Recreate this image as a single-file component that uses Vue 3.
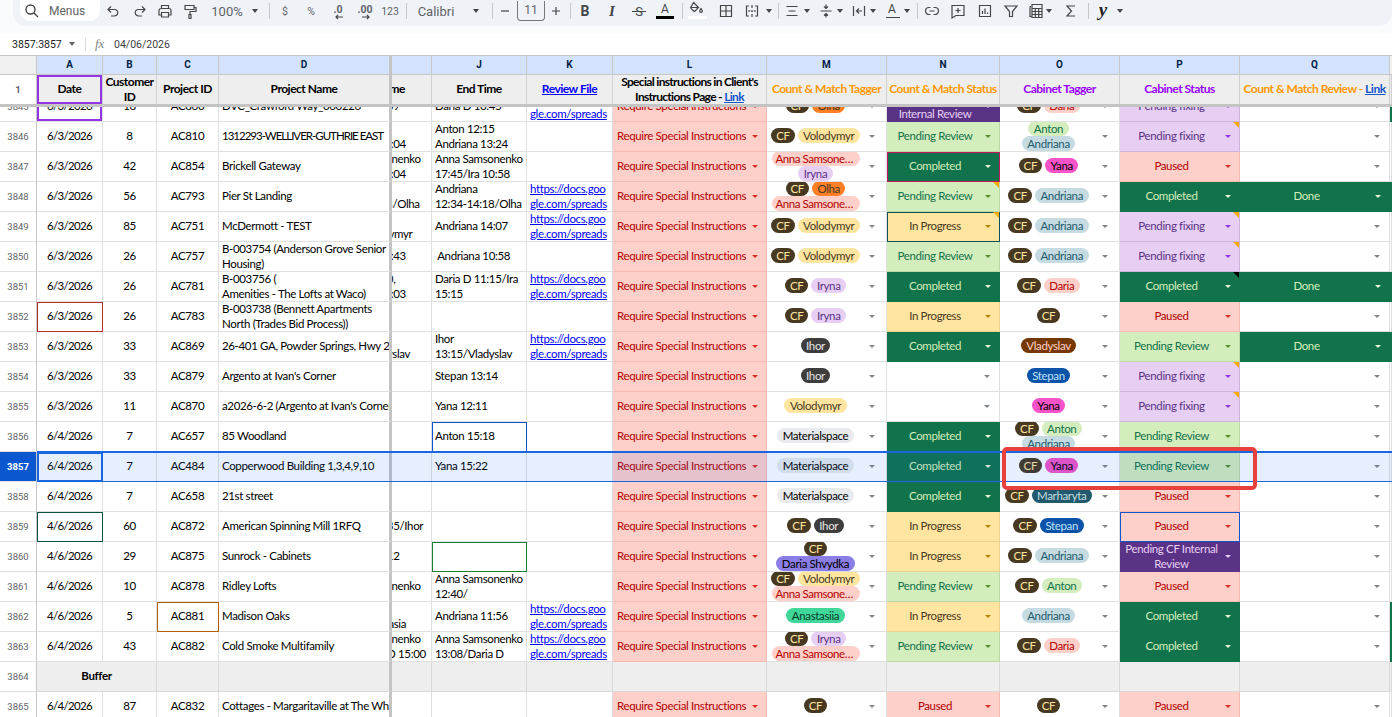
<template>
  <div class="sheet">
    <div class="menubar">
      <div class="pill">
        <div v-for="t in tools" :key="t.c" class="tool" :class="t.cls" :style="{ marginLeft: t.ml + 'px', width: t.w + 'px' }">
          <template v-if="t.kind == 'search'">
            <svg viewBox="0 0 18 18" width="18" height="18"><path d="M7.5 3a4.5 4.5 0 1 0 0 9 4.500 4.500 0 0 0 0-9z M11 11l4 4" /></svg>
            <span class="menus">Menus</span>
          </template>
          <svg v-else-if="t.d" viewBox="0 0 18 18" width="18" height="18"><path :d="t.d" /></svg>
          <i v-else-if="t.kind == 'caret'" class="tcaret"></i>
          <b v-else-if="t.kind == 'div'" class="tdiv"></b>
          <svg v-else-if="t.kind == 'dec'" viewBox="0 0 24 18" width="24" height="18">
            <text x="12" y="11" text-anchor="middle" class="dectext">{{ t.t }}</text>
            <path :d="t.arrow" />
          </svg>
          <span v-else-if="t.t" class="ttext">{{ t.t }}</span>
        </div>
      </div>
    </div>

    <div class="formula">
      <span class="range">3857:3857</span>
      <i class="tcaret rangecaret"></i>
      <b class="fdiv"></b>
      <span class="fx">fx</span>
      <span class="fval">04/06/2026</span>
    </div>

    <div class="row letters">
      <div class="lc corner"></div>
      <div v-for="l in letters" :key="l.k" class="lc" :class="l.cls">{{ l.k }}</div>
    </div>

    <div class="row hdr">
      <div class="num">1</div>
      <div class="cell ctr mk-purple">Date</div>
      <div class="cell ctr"><span>Customer<br>ID</span></div>
      <div class="cell ctr">Project ID</div>
      <div class="cell ctr bar">Project Name</div>
      <div class="cell clip"><span class="hdrclip">Start Time</span></div>
      <div class="cell ctr">End Time</div>
      <div class="cell ctr"><a class="hlink">Review File</a></div>
      <div class="cell ctr tight"><span>Special instructions in Client's<br>Instructions Page - <a class="blink">Link</a></span></div>
      <div class="cell ctr orange">Count &amp; Match Tagger</div>
      <div class="cell ctr orange">Count &amp; Match Status</div>
      <div class="cell ctr violet">Cabinet Tagger</div>
      <div class="cell ctr violet">Cabinet Status</div>
      <div class="cell ctr orange"><span>Count &amp; Match Review - <a class="blink">Link</a></span></div>
      <div class="cell"></div>
    </div>
    <div class="freeze"></div>

    <div class="body">
      <div class="rows">
        <div v-for="r in rows" :key="r.no" class="row data" :class="{ selected: r.no == 3857, buffer: r.buffer }">
          <div class="num">{{ r.no }}</div>
          <template v-if="r.buffer">
            <div class="cell ctr merged">Buffer</div>
            <div class="cell"></div>
            <div class="cell bar"></div>
            <div class="cell"></div>
            <div class="cell"></div>
            <div class="cell"></div>
            <div class="cell"></div>
            <div class="cell"></div>
            <div class="cell"></div>
            <div class="cell"></div>
            <div class="cell"></div>
            <div class="cell"></div>
            <div class="cell"></div>
          </template>
          <template v-else>
            <div class="cell ctr date" :class="mark(r, 'a')">{{ r.a }}</div>
            <div class="cell ctr">{{ r.b }}</div>
            <div class="cell ctr" :class="mark(r, 'c')">{{ r.c }}</div>
            <div class="cell left bar" :class="{ squeeze: r.squeeze }">{{ r.d }}</div>
            <div class="cell clip"><span class="inner">{{ r.i }}</span></div>
            <div class="cell left" :class="mark(r, 'j')">{{ r.j }}</div>
            <div class="cell left linkcell"><a v-if="r.k">https://docs.goo<br>gle.com/spreads</a></div>
            <div class="cell st st-req">
              <span class="reqtext">Require Special Instructions</span><i class="dd"></i>
            </div>
            <div class="cell chips">
              <div class="chipwrap"><span v-for="c in r.m" :key="c" class="chip" :class="chipCls[c]">{{ c }}</span></div>
              <i class="dd gray"></i>
            </div>
            <div class="cell st" :class="['st-' + (statusCls[r.n] || 'none'), mark(r, 'n'), r.ntri ? 'tri-' + r.ntri : '']">
              <span>{{ labels[r.n] }}</span><i class="dd" :class="{ gray: !r.n }"></i>
            </div>
            <div class="cell chips">
              <div class="chipwrap"><span v-for="c in r.o" :key="c" class="chip" :class="chipCls[c]">{{ c }}</span></div>
              <i class="dd gray"></i>
            </div>
            <div class="cell st" :class="['st-' + (r.p || 'none'), mark(r, 'p'), r.ptri ? 'tri-' + r.ptri : '']">
              <span>{{ labels[r.p] }}</span><i class="dd" :class="{ gray: !r.p }"></i>
            </div>
            <div class="cell st" :class="'st-' + (r.q || 'none')">
              <span>{{ labels[r.q] }}</span><i class="dd q" :class="{ gray: !r.q }"></i>
            </div>
            <div class="cell" :class="{ 'st-done': r.r }"></div>
          </template>
        </div>
      </div>
    </div>

    <div class="callout"></div>
  </div>
</template>

<script setup>
const rawTools = [
  { c: 60, w: 80, kind: 'search', cls: 'search' },
  { c: 113, d: 'M7 4.500 4 7.500 7 10.500 M4 7.500h6.500a3.200 3.200 0 0 1 0 6.500H7' },
  { c: 140, d: 'M11 4.500 14 7.500 11 10.500 M14 7.500H7.500a3.200 3.200 0 0 0 0 6.500H11' },
  { c: 165, d: 'M5.500 6.500V3.500h7v3 M5.500 13H3V8.500a2 2 0 0 1 2-2h8a2 2 0 0 1 2 2V13h-2.500 M5.500 10.500h7v4.500h-7z' },
  { c: 190, d: 'M4 3.500h9v4H4z M13 5.500h2v4H9v3 M8 12.500h2v4H8z' },
  { c: 227, w: 36, t: '100%', cls: 'big' },
  { c: 255, w: 8, kind: 'caret' },
  { c: 269, w: 1, kind: 'div' },
  { c: 285, w: 12, t: '$', cls: 'small' },
  { c: 311, w: 14, t: '%', cls: 'small' },
  { c: 338, w: 24, kind: 'dec', t: '.0', arrow: 'M17 15h-7 M12 13l-2 2 2 2' },
  { c: 365, w: 24, kind: 'dec', t: '.00', arrow: 'M9 15h7 M14 13l2 2-2 2' },
  { c: 390, w: 22, t: '123', cls: 'small' },
  { c: 406, w: 1, kind: 'div' },
  { c: 436, w: 40, t: 'Calibri', cls: 'big' },
  { c: 476, w: 8, kind: 'caret' },
  { c: 492, w: 1, kind: 'div' },
  { c: 505, d: 'M5 9h8' },
  { c: 531, w: 28, t: '11', cls: 'sizebox' },
  { c: 556, d: 'M9 5v8 M5 9h8' },
  { c: 570, w: 1, kind: 'div' },
  { c: 585, w: 14, t: 'B', cls: 'bold' },
  { c: 612, w: 14, t: 'I', cls: 'ital' },
  { c: 639, w: 14, t: 'S', cls: 'strike' },
  { c: 665, w: 18, t: 'A', cls: 'colora' },
  { c: 682, w: 1, kind: 'div' },
  { c: 697, w: 19, cls: 'fill', d: 'M5.500 2.500l5 5-3.500 3.500a1 1 0 0 1-1.400 0L3 8.400a1 1 0 0 1 0-1.400z M2.500 7.500h8 M13 8.500c-.8 1.200-1.300 1.900-1.300 2.500a1.300 1.300 0 0 0 2.600 0c0-.6-.5-1.300-1.300-2.500z' },
  { c: 726, d: 'M3.500 3.500h11v11h-11z M9 3.500v11 M3.500 9h11' },
  { c: 752, d: 'M6 4H3.500v10H6 M12 4h2.500v10H12 M9 3v3 M9 8v2 M9 12v3 M5 9h2.500 M13 9h-2.500' },
  { c: 769, w: 8, kind: 'caret' },
  { c: 778, w: 1, kind: 'div' },
  { c: 792, d: 'M3.500 4.500h11 M5.500 9h7 M3.500 13.500h11' },
  { c: 807, w: 8, kind: 'caret' },
  { c: 826, d: 'M9 2.500v3.500 M7 4.500l2 2 2-2 M3.500 9h11 M9 15.500v-3.500 M7 13.500l2-2 2 2' },
  { c: 840, w: 8, kind: 'caret' },
  { c: 859, d: 'M3.500 4v10 M14.500 4v10 M6 9h6 M9 6.500 6.500 9 9 11.500' },
  { c: 873, w: 8, kind: 'caret' },
  { c: 892, w: 16, t: 'A', cls: 'rota' },
  { c: 907, w: 8, kind: 'caret' },
  { c: 917, w: 1, kind: 'div' },
  { c: 932, d: 'M7.500 12.500H6a3.500 3.500 0 0 1 0-7h1.500 M10.500 5.500H12a3.500 3.500 0 0 1 0 7h-1.500 M6.500 9h5' },
  { c: 958, d: 'M3 3.500h12v10H7l-4 2.500z M9 6v5 M6.500 8.500h5' },
  { c: 985, d: 'M3.500 3.500h11v11h-11z M6.500 9v3 M9 6.500V12 M11.500 10.500V12' },
  { c: 1011, d: 'M3 4h12l-4.500 5.500v5h-3v-5z' },
  { c: 1036, d: 'M3 4.500h1 M3 4.500v10h2 M5 2.500h10v4H5z M5 6.500h10v9H5z M8.300 6.500v9 M11.700 6.500v9 M5 9.500h10 M5 12.500h10' },
  { c: 1049, w: 8, kind: 'caret' },
  { c: 1071, d: 'M13 4H5l4.500 5L5 14h8' },
  { c: 1088, w: 1, kind: 'div' },
  { c: 1103, w: 16, t: 'y', cls: 'ylogo' },
  { c: 1120, w: 8, kind: 'caret' },
]

// each toolbar item sits by its centre, the margin is what is left after the one before it
let edge = 13
const tools = rawTools.map((t) => {
  const w = t.w || 18
  const ml = t.c - w / 2 - edge
  edge = t.c + w / 2
  return { ...t, w, ml }
})

const letters = [
  { k: 'A' }, { k: 'B' }, { k: 'C' }, { k: 'D', cls: 'bar' }, { k: '', cls: 'nameless' },
  { k: 'J' }, { k: 'K' }, { k: 'L' }, { k: 'M' }, { k: 'N' }, { k: 'O' }, { k: 'P' }, { k: 'Q' }, { k: ' ', cls: 'last' },
]

const labels = {
  rev: 'Pending Review',
  done: 'Completed',
  prog: 'In Progress',
  paused: 'Paused',
  fix: 'Pending fixing',
  intern: 'Pending CF Internal Review',
  intern2: 'Pending CF\nInternal Review',
  ok: 'Done',
}
const statusCls = { rev: 'rev', done: 'done', prog: 'prog', paused: 'paused', intern2: 'intern' }

const chipCls = {
  CF: 'c-cf',
  Volodymyr: 'c-vol',
  Olha: 'c-olha',
  'Anna Samsonenko': 'c-anna',
  Daria: 'c-red',
  Iryna: 'c-iryna',
  Anton: 'c-anton',
  Andriana: 'c-andr',
  Yana: 'c-yana',
  Ihor: 'c-ihor',
  Vladyslav: 'c-vlad',
  Stepan: 'c-stepan',
  Materialspace: 'c-mat',
  Marharyta: 'c-marh',
  'Daria Shvydka': 'c-shv',
  Anastasiia: 'c-ana',
}

const mark = (r, col) => (r.mk && r.mk[col] ? 'mk-' + r.mk[col] : '')

const rows = [
  { no: 3845, a: '6/3/2026', b: 18, c: 'AC860', d: 'DVC_Crawford Way_060226', i: 'Daria D 16:09', j: 'Daria D 16:45', k: 1, m: ['CF', 'Olha'], n: 'intern2', o: ['CF', 'Daria'], p: 'fix', r: 1, mk: { a: 'purple' } },
  { no: 3846, a: '6/3/2026', b: 8, c: 'AC810', d: '1312293-WELLIVER-GUTHRIE EAST', squeeze: 1, i: 'Volodymyr\nAndriana 12:04', j: 'Anton 12:15\nAndriana 13:24', m: ['CF', 'Volodymyr'], n: 'rev', o: ['Anton', 'Andriana'], p: 'fix', ptri: 'o' },
  { no: 3847, a: '6/3/2026', b: 42, c: 'AC854', d: 'Brickell Gateway', i: 'Anna Samsonenko\nAndriana 12:04', j: 'Anna Samsonenko\n17:45/Ira 10:58', m: ['Anna Samsonenko', 'Iryna'], n: 'done', o: ['CF', 'Yana'], p: 'paused', mk: { n: 'pink' } },
  { no: 3848, a: '6/3/2026', b: 56, c: 'AC793', d: 'Pier St Landing', i: 'Andriana\n12:34-14:18/Olha', j: 'Andriana\n12:34-14:18/Olha', k: 1, m: ['CF', 'Olha', 'Anna Samsonenko'], n: 'rev', ntri: 'o', o: ['CF', 'Andriana'], p: 'done', q: 'ok', r: 1 },
  { no: 3849, a: '6/3/2026', b: 85, c: 'AC751', d: 'McDermott - TEST', i: 'Andriana\nIhor / Volodymyr', j: 'Andriana 14:07', k: 1, m: ['CF', 'Volodymyr'], n: 'prog', ntri: 'o', o: ['CF', 'Andriana'], p: 'fix', ptri: 'o', mk: { n: 'teal' } },
  { no: 3850, a: '6/3/2026', b: 26, c: 'AC757', d: 'B-003754 (Anderson Grove Senior\nHousing)', i: 'Andriana 10:43', j: ' Andriana 10:58', m: ['CF', 'Volodymyr'], n: 'rev', o: ['CF', 'Andriana'], p: 'fix', ptri: 'o' },
  { no: 3851, a: '6/3/2026', b: 26, c: 'AC781', d: 'B-003756 (\nAmenities - The Lofts at Waco)', i: 'Daria D 1:10,\nAndriana 15:03', j: 'Daria D 11:15/Ira\n15:15', k: 1, m: ['CF', 'Iryna'], n: 'done', o: ['CF', 'Daria'], p: 'done', ptri: 'k', q: 'ok', r: 1 },
  { no: 3852, a: '6/3/2026', b: 26, c: 'AC783', d: 'B-003738 (Bennett Apartments\nNorth (Trades Bid Process))', i: '', j: '', m: ['CF', 'Iryna'], n: 'prog', o: ['CF'], p: 'paused', mk: { a: 'red' } },
  { no: 3853, a: '6/3/2026', b: 33, c: 'AC869', d: '26-401 GA, Powder Springs, Hwy 278', i: 'Ihor\n12:40/Vladyslav', j: 'Ihor\n13:15/Vladyslav', k: 1, m: ['Ihor'], n: 'done', o: ['Vladyslav'], p: 'rev', q: 'ok', r: 1 },
  { no: 3854, a: '6/3/2026', b: 33, c: 'AC879', d: "Argento at Ivan's Corner", i: 'Stepan 12:1', j: 'Stepan 13:14', m: ['Ihor'], o: ['Stepan'], p: 'fix', ptri: 'o' },
  { no: 3855, a: '6/3/2026', b: 11, c: 'AC870', d: "a2026-6-2 (Argento at Ivan's Corner)", i: '', j: 'Yana 12:11', m: ['Volodymyr'], o: ['Yana'], p: 'fix', ptri: 'o' },
  { no: 3856, a: '6/4/2026', b: 7, c: 'AC657', d: '85 Woodland', i: '', j: 'Anton 15:18', m: ['Materialspace'], n: 'done', o: ['CF', 'Anton', 'Andriana'], p: 'rev', mk: { j: 'blue' } },
  { no: 3857, a: '6/4/2026', b: 7, c: 'AC484', d: 'Copperwood Building 1,3,4,9,10', i: '', j: 'Yana 15:22', m: ['Materialspace'], n: 'done', o: ['CF', 'Yana'], p: 'rev', mk: { a: 'active' } },
  { no: 3858, a: '6/4/2026', b: 7, c: 'AC658', d: '21st street', i: '', j: '', m: ['Materialspace'], n: 'done', o: ['CF', 'Marharyta'], p: 'paused' },
  { no: 3859, a: '4/6/2026', b: 60, c: 'AC872', d: 'American Spinning Mill 1RFQ', i: 'Daria D 12:35/Ihor\n', j: '', m: ['CF', 'Ihor'], n: 'prog', o: ['CF', 'Stepan'], p: 'paused', mk: { a: 'dgreen', p: 'blue' } },
  { no: 3860, a: '4/6/2026', b: 29, c: 'AC875', d: 'Sunrock - Cabinets', i: 'Andriana 1:12', j: '', m: ['CF', 'Daria Shvydka'], n: 'prog', o: ['CF', 'Andriana'], p: 'intern', mk: { j: 'green' } },
  { no: 3861, a: '4/6/2026', b: 10, c: 'AC878', d: 'Ridley Lofts', i: 'Anna Samsonenko\n', j: 'Anna Samsonenko\n12:40/', m: ['CF', 'Volodymyr', 'Anna Samsonenko'], n: 'rev', o: ['CF', 'Anton'], p: 'paused' },
  { no: 3862, a: '4/6/2026', b: 5, c: 'AC881', d: 'Madison Oaks', i: '\nIhor / Anastasia', j: 'Andriana 11:56', k: 1, m: ['Anastasiia'], n: 'prog', o: ['Andriana'], p: 'done', r: 1, mk: { c: 'orange' } },
  { no: 3863, a: '6/4/2026', b: 43, c: 'AC882', d: 'Cold Smoke Multifamily', i: 'Anna Samsonenko\n2:11/Daria D 15:00', j: 'Anna Samsonenko\n13:08/Daria D', k: 1, m: ['CF', 'Iryna', 'Anna Samsonenko'], n: 'rev', o: ['CF', 'Daria'], p: 'done', r: 1 },
  { no: 3864, buffer: true },
  { no: 3865, a: '6/4/2026', b: 87, c: 'AC832', d: 'Cottages - Margaritaville at The Whanau', i: '', j: '', m: ['CF'], n: 'paused', o: ['CF'], p: 'paused' },
]
</script>

<style>
html, body { margin: 0; background: #f9fbfd; }
</style>

<style scoped>
.sheet {
  position: relative;
  width: 1392px;
  height: 717px;
  overflow: hidden;
  background: #f9fbfd;
  font-family: Lato, "Liberation Sans", sans-serif;
  font-size: 11.5px;
  color: #000;
}
.menubar {
  height: 33px;
  padding-left: 13px;
}
.pill {
  display: flex;
  align-items: center;
  height: 26px;
  background: #eff3f8;
  border-radius: 0 0 13px 13px;
  font-family: Roboto, sans-serif;
  color: #444746;
}
.tool {
  flex: none;
  display: flex;
  align-items: center;
  justify-content: center;
  height: 18px;
  margin-top: -4px;
}
.tool svg {
  overflow: visible;
  fill: none;
  stroke: #444746;
  stroke-width: 1.2;
}
.tool.search {
  height: 21px;
  margin-top: -5px;
  justify-content: flex-start;
  padding-left: 3px;
  background: #fff;
  border-radius: 0 0 11px 11px;
  box-sizing: border-box;
  gap: 8px;
}
.tool.search svg { stroke-width: 1.4; }
.menus { font-size: 12px; color: #5f6368; }
.ttext { font-size: 12px; color: #5f6368; }
.big .ttext { font-size: 13px; }
.small .ttext { font-size: 10.5px; }
.tcaret {
  display: block;
  width: 0;
  height: 0;
  border-left: 3.5px solid transparent;
  border-right: 3.5px solid transparent;
  border-top: 4px solid #444746;
}
.tdiv {
  display: block;
  width: 1px;
  height: 16px;
  background: #c7c7c7;
}
.dectext {
  font-family: Roboto, sans-serif;
  font-size: 10.5px;
  font-weight: 700;
  fill: #5f6368;
  stroke: none;
}
.sizebox {
  box-sizing: border-box;
  height: 20px;
  margin-top: -5px;
  border: 1px solid #747775;
  border-top: none;
  border-radius: 0 0 4px 4px;
}
.bold .ttext { font-size: 14px; font-weight: 700; color: #444746; }
.ital .ttext { font-family: "Liberation Serif", serif; font-size: 15px; font-style: italic; font-weight: 700; color: #444746; }
.strike { position: relative; }
.strike .ttext { font-size: 13px; color: #444746; }
.strike::after {
  content: "";
  position: absolute;
  left: 0;
  right: 0;
  top: 9px;
  height: 1px;
  background: #444746;
}
.colora { position: relative; }
.colora .ttext { font-size: 12px; color: #444746; margin-top: -5px; }
.colora::after {
  content: "";
  position: absolute;
  left: 0;
  right: 0;
  bottom: 1px;
  height: 3px;
  background: #000;
}
.fill { position: relative; }
.fill svg { margin-top: -5px; }
.fill::after {
  content: "";
  position: absolute;
  left: 0;
  right: 0;
  bottom: 1px;
  height: 3px;
  background: #fff;
}
.rota { position: relative; }
.rota .ttext { font-size: 12px; color: #444746; margin-top: -4px; }
.rota::after {
  content: "";
  position: absolute;
  left: 2px;
  right: 0;
  bottom: 2px;
  height: 1px;
  background: #444746;
}
.ylogo .ttext {
  font-family: "Liberation Serif", serif;
  font-size: 19px;
  font-style: italic;
  font-weight: 700;
  color: #202124;
  margin-top: -3px;
}

.formula {
  display: flex;
  align-items: center;
  height: 22px;
  background: #fff;
  font-family: Roboto, sans-serif;
  font-size: 10.5px;
  color: #202124;
}
.range { margin-left: 12px; width: 56px; }
.rangecaret { margin-left: 1px; border-top-color: #5f6368; }
.fdiv { width: 1px; height: 13px; background: #dadce0; margin-left: 10px; }
.fx {
  margin-left: 9px;
  width: 19px;
  font-family: "Liberation Serif", serif;
  font-size: 13px;
  font-style: italic;
  color: #80868b;
}
.fval { color: #3c4043; }

.row {
  display: grid;
  grid-template-columns: 37px 66px 54px 62px 173px 40px 95px 86px 154px 120px 113px 120px 120px 150px 2px;
}
.letters {
  height: 20px;
  box-sizing: border-box;
  border-top: 1px solid #c7c7c7;
  font-family: Roboto, sans-serif;
  font-size: 10px;
  font-weight: 700;
  color: #041e49;
  line-height: 17px;
}
.lc {
  box-sizing: border-box;
  text-align: center;
  background: #d3e3fd;
  border-right: 1px solid #c7c7c7;
  border-bottom: 1px solid #c7c7c7;
}
.lc.corner { background: #f0f0f0; }
.lc.bar { border-right: 3px solid #c4c4c4; }
.lc.last { border-right: none; background: #f0f0f0; }

.hdr {
  height: 29px;
  background: #eee;
  font-weight: 700;
}
.hdr .cell {
  border-bottom: none;
  border-right-color: #cfcfcf;
  font-size: 12px;
  letter-spacing: -0.5px;
}
.hdr .cell.tight { letter-spacing: -0.68px; }
.hdr .cell.bar { border-right-color: #c4c4c4; }
.hdr .num { border-bottom: none; }
.orange { color: #ff9900; }
.violet { color: #9900ff; }
.hlink { color: #0000ff; text-decoration: underline; }
.blink { color: #1155cc; text-decoration: underline; }
.freeze { height: 3px; background: #c4c4c4; }

.body { height: 610px; overflow: hidden; }
.rows { margin-top: -15px; }
.data {
  position: relative;
  height: 30px;
}
.num {
  box-sizing: border-box;
  display: flex;
  align-items: center;
  justify-content: center;
  background: #fff;
  border-right: 1px solid #c7c7c7;
  border-bottom: 1px solid #e0e0e0;
  font-family: Roboto, sans-serif;
  font-size: 9.5px;
  color: #5f6368;
}
.cell {
  position: relative;
  box-sizing: border-box;
  display: flex;
  align-items: center;
  overflow: hidden;
  padding-bottom: 2px;
  background: #fff;
  border-right: 1px solid #e0e0e0;
  border-bottom: 1px solid #e0e0e0;
  line-height: 15px;
  letter-spacing: -0.36px;
  white-space: pre;
}
.hdr .cell { background: #eee; }
.ctr { justify-content: center; text-align: center; }
.date { letter-spacing: -0.65px; }
.left { padding-left: 3px; }
.squeeze { letter-spacing: -1px; }
.bar { border-right: 3px solid #c4c4c4; }
.clip { white-space: pre; }
.inner { flex: none; margin-left: -59px; }
.hdrclip { flex: none; margin-left: -37px; }
.linkcell a { color: #0000ff; text-decoration: underline; }

.st { justify-content: center; padding-right: 16px; text-align: center; white-space: pre-line; }
.dd {
  position: absolute;
  top: 13px;
  right: 8px;
  width: 0;
  height: 0;
  border-left: 3.5px solid transparent;
  border-right: 3.5px solid transparent;
  border-top: 3.500px solid currentColor;
}
.dd.gray { color: #80868b; right: 9px; }
.chips .dd.gray { right: 11px; }

.st-req { justify-content: flex-start; padding-left: 4px; padding-right: 0; background: #ffcfc9; color: #b10202; border-color: #f4b9b1; white-space: pre; }
.st-req .dd { color: #d93025; }
.st-rev { background: #d4edbc; color: #11734b; border-color: #bcd9a3; }
.st-rev .dd { color: #5d8f2e; }
.st-done { background: #11734b; color: #d4edbc; border-color: #11734b; }
.st-done .dd { color: #e6f4dc; }
.st-prog { background: #ffe5a0; color: #473821; border-color: #ecd28a; }
.st-prog .dd { color: #b8860b; }
.st-paused { background: #ffcfc9; color: #b10202; border-color: #f4b9b1; }
.st-paused .dd { color: #d93025; }
.st-fix { background: #e6cff2; color: #5a3286; border-color: #cdb4dc; }
.st-fix .dd { color: #9334e6; }
.st-intern { background: #5a3286; color: #e6cff2; border-color: #5a3286; }
.st-intern .dd { color: #e6cff2; }
.st-ok { background: #11734b; color: #d4edbc; border-color: #11734b; }
.st-ok .dd { color: #e6f4dc; }

.tri-o::before,
.tri-k::before {
  content: "";
  position: absolute;
  top: 0;
  right: 0;
  border-left: 6px solid transparent;
  border-top: 6px solid #f9ab00;
}
.tri-k::before { border-top-color: #000; }

.chips { padding: 0 25px 2px 3px; }
.chipwrap {
  display: flex;
  flex-wrap: wrap;
  justify-content: center;
  align-content: center;
  gap: 0 3px;
  width: 92px;
  height: 100%;
}
.chip {
  box-sizing: border-box;
  max-width: 88px;
  height: 15px;
  padding: 0 5.5px;
  border-radius: 8px;
  overflow: hidden;
  text-overflow: ellipsis;
  line-height: 15px;
  white-space: nowrap;
}
.c-cf { background: #473821; color: #ffe5a0; padding: 0 5px; }
.c-vol { background: #ffe5a0; color: #473821; }
.c-olha { background: #ff7f27; color: #473821; }
.c-red { background: #ffcfc9; color: #b10202; }
.c-anna { background: #ffcfc9; color: #b10202; padding: 0 4px; letter-spacing: -0.45px; }
.c-iryna { background: #e6cff2; color: #5a3286; }
.c-anton { background: #d4edbc; color: #11734b; }
.c-andr { background: #c6dbe1; color: #215a6c; }
.c-yana { background: #f553c7; color: #000; }
.c-ihor { background: #3d3d3d; color: #e5e5e5; }
.c-vlad { background: #753800; color: #ffcfc9; }
.c-stepan { background: #0a53a8; color: #bfe1f6; }
.c-mat { background: #e8eaed; color: #000; }
.c-marh { background: #215a6c; color: #c6dbe1; }
.c-shv { background: #8a7ee6; color: #000; }
.c-ana { background: #3fd79a; color: #0a3d2a; }

.mk-purple { box-shadow: inset 0 0 0 2px #9334e6; }
.mk-red { outline: 1.5px solid #b7312c; outline-offset: -1.5px; }
.mk-blue { outline: 1.5px solid #1155cc; outline-offset: -1.5px; }
.mk-dgreen { outline: 1.5px solid #0b5345; outline-offset: -1.5px; }
.mk-green { outline: 1.5px solid #1e7e34; outline-offset: -1.5px; }
.mk-orange { outline: 1.5px solid #b45f06; outline-offset: -1.5px; }
.mk-pink { outline: 1.5px solid #c2185b; outline-offset: -1.5px; }
.mk-teal { outline: 1.5px solid #134f5c; outline-offset: -1.5px; }
.mk-active { outline: 2px solid #1a66e0; outline-offset: -2px; }

.selected::after {
  content: "";
  position: absolute;
  inset: -1px 0 -1px 37px;
  background: rgba(14, 101, 235, 0.1);
  border-top: 2px solid #1a66e0;
  border-bottom: 2px solid #1a66e0;
  pointer-events: none;
}
.selected .num {
  background: #0b57d0;
  color: #fff;
  font-weight: 700;
}

.buffer .cell { background: #eee; border-color: #d9d9d9; }
.buffer .cell.bar { border-right-color: #c4c4c4; }
.merged { grid-column: span 2; font-weight: 700; }

.callout {
  position: absolute;
  left: 1002px;
  top: 447px;
  width: 255px;
  height: 43px;
  box-sizing: border-box;
  border: 4px solid #e8403c;
  border-radius: 5px;
}
</style>
